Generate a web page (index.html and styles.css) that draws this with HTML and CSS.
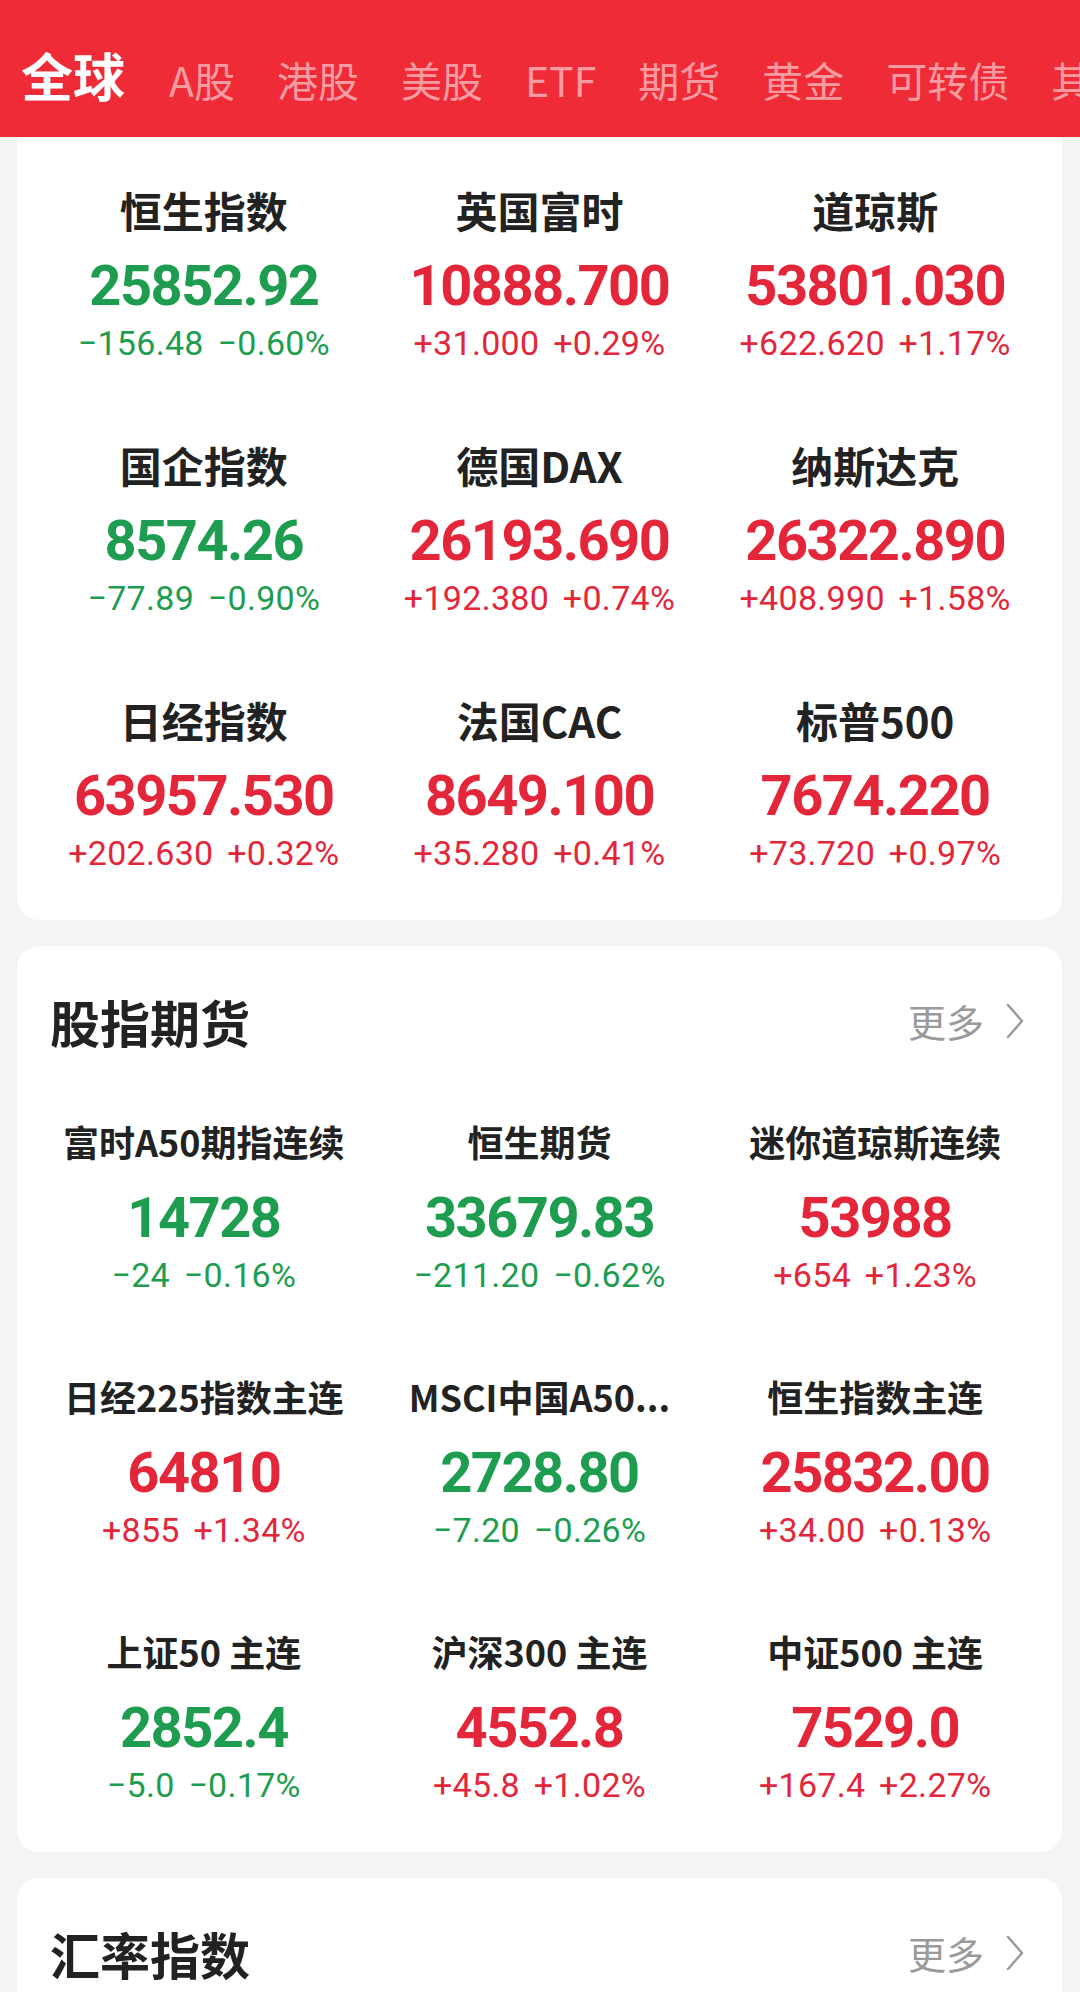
FILE: index.html
```html
<!DOCTYPE html>
<html lang="zh-CN">
<head>
<meta charset="utf-8">
<title>全球行情</title>
<link rel="stylesheet" href="styles.css">
</head>
<body>
<header class="topbar">
  <nav class="tabs">
    <span class="tab active">全球</span>
    <span class="tab">A股</span>
    <span class="tab">港股</span>
    <span class="tab">美股</span>
    <span class="tab">ETF</span>
    <span class="tab">期货</span>
    <span class="tab">黄金</span>
    <span class="tab">可转债</span>
    <span class="tab">其他</span>
  </nav>
</header>
<main class="content">
  <section class="card card-first">
    <div class="grid">
      <div class="quote"><div class="name">恒生指数</div><div class="price down">25852.92</div><div class="chg down">−156.48 −0.60%</div></div>
      <div class="quote"><div class="name">英国富时</div><div class="price up">10888.700</div><div class="chg up">+31.000 +0.29%</div></div>
      <div class="quote"><div class="name">道琼斯</div><div class="price up">53801.030</div><div class="chg up">+622.620 +1.17%</div></div>
      <div class="quote"><div class="name">国企指数</div><div class="price down">8574.26</div><div class="chg down">−77.89 −0.90%</div></div>
      <div class="quote"><div class="name">德国DAX</div><div class="price up">26193.690</div><div class="chg up">+192.380 +0.74%</div></div>
      <div class="quote"><div class="name">纳斯达克</div><div class="price up">26322.890</div><div class="chg up">+408.990 +1.58%</div></div>
      <div class="quote"><div class="name">日经指数</div><div class="price up">63957.530</div><div class="chg up">+202.630 +0.32%</div></div>
      <div class="quote"><div class="name">法国CAC</div><div class="price up">8649.100</div><div class="chg up">+35.280 +0.41%</div></div>
      <div class="quote"><div class="name">标普500</div><div class="price up">7674.220</div><div class="chg up">+73.720 +0.97%</div></div>
    </div>
  </section>

  <section class="card">
    <div class="card-head">
      <h2 class="title">股指期货</h2>
      <a class="more">更多<svg class="chev" viewBox="0 0 18 36" width="18" height="36"><polyline points="2,2 16,18 2,34" fill="none" stroke="#9a9a9a" stroke-width="2.4" stroke-linecap="round" stroke-linejoin="round"/></svg></a>
    </div>
    <div class="grid small">
      <div class="quote"><div class="name">富时A50期指连续</div><div class="price down">14728</div><div class="chg down">−24 −0.16%</div></div>
      <div class="quote"><div class="name">恒生期货</div><div class="price down">33679.83</div><div class="chg down">−211.20 −0.62%</div></div>
      <div class="quote"><div class="name">迷你道琼斯连续</div><div class="price up">53988</div><div class="chg up">+654 +1.23%</div></div>
      <div class="quote"><div class="name">日经225指数主连</div><div class="price up">64810</div><div class="chg up">+855 +1.34%</div></div>
      <div class="quote"><div class="name">MSCI中国A50...</div><div class="price down">2728.80</div><div class="chg down">−7.20 −0.26%</div></div>
      <div class="quote"><div class="name">恒生指数主连</div><div class="price up">25832.00</div><div class="chg up">+34.00 +0.13%</div></div>
      <div class="quote"><div class="name">上证50 主连</div><div class="price down">2852.4</div><div class="chg down">−5.0 −0.17%</div></div>
      <div class="quote"><div class="name">沪深300 主连</div><div class="price up">4552.8</div><div class="chg up">+45.8 +1.02%</div></div>
      <div class="quote"><div class="name">中证500 主连</div><div class="price up">7529.0</div><div class="chg up">+167.4 +2.27%</div></div>
    </div>
  </section>

  <section class="card card-last">
    <div class="card-head">
      <h2 class="title">汇率指数</h2>
      <a class="more">更多<svg class="chev" viewBox="0 0 18 36" width="18" height="36"><polyline points="2,2 16,18 2,34" fill="none" stroke="#9a9a9a" stroke-width="2.4" stroke-linecap="round" stroke-linejoin="round"/></svg></a>
    </div>
  </section>
</main>
</body>
</html>
```

FILE: styles.css
```css
html, body {
  margin: 0;
  padding: 0;
}

body {
  background: #f4f4f4;
  font-family: Roboto, "Noto Sans CJK SC", sans-serif;
  color: #222;
}

.topbar {
  background: #ee2b37;
  height: 137px;
  box-sizing: border-box;
  padding: 45px 0 0 21px;
  overflow: hidden;
}

.tabs {
  display: flex;
  align-items: baseline;
  gap: 42px;
  white-space: nowrap;
  font-family: "Noto Sans CJK SC", sans-serif;
}

.tab {
  font-size: 41px;
  line-height: 56px;
  color: rgba(255, 255, 255, 0.55);
  flex: none;
}

.tab.active {
  font-size: 52px;
  line-height: 60px;
  font-weight: 700;
  color: #fff;
  margin-right: 2px;
}

.content {
  display: flex;
  flex-direction: column;
  gap: 26px;
  padding: 0 18px 0 17px;
  border-left: 2px solid #a0a0a0;
  margin-left: -2px;
}

.card {
  background: #fff;
  border-radius: 22px;
  padding: 45px 19px 46px;
}

.card-first {
  border-radius: 0 0 22px 22px;
  padding-top: 48px;
}

.card-last {
  padding-bottom: 80px;
}

.card-head {
  display: flex;
  align-items: center;
  justify-content: space-between;
  padding: 0 19px 0 14px;
}

.title {
  margin: 0;
  font-family: "Noto Sans CJK SC", sans-serif;
  font-size: 50px;
  line-height: 60px;
  font-weight: 700;
  color: #222;
}

.more {
  display: flex;
  align-items: center;
  gap: 22px;
  font-family: "Noto Sans CJK SC", sans-serif;
  font-size: 38px;
  line-height: 48px;
  color: #9a9a9a;
}

.chev {
  display: block;
}

.grid {
  display: grid;
  grid-template-columns: repeat(3, 1fr);
  row-gap: 76px;
}

.grid.small {
  margin-top: 68px;
  row-gap: 78px;
}

.quote {
  display: flex;
  flex-direction: column;
  align-items: center;
  text-align: center;
  white-space: nowrap;
}

.name {
  font-family: "Noto Sans CJK SC", sans-serif;
  font-weight: 700;
  font-size: 42px;
  line-height: 50px;
  color: #222;
}

.small .name {
  font-size: 36px;
  line-height: 44px;
}

.price {
  font-weight: 700;
  font-size: 56px;
  line-height: 66px;
  letter-spacing: -1.5px;
  margin-top: 18px;
}

.small .price {
  margin-top: 22px;
}

.chg {
  font-size: 34px;
  line-height: 42px;
  margin-top: 3px;
  letter-spacing: 0.3px;
  word-spacing: 5px;
}

.up {
  color: #e3263a;
}

.down {
  color: #1e9d50;
}
```
